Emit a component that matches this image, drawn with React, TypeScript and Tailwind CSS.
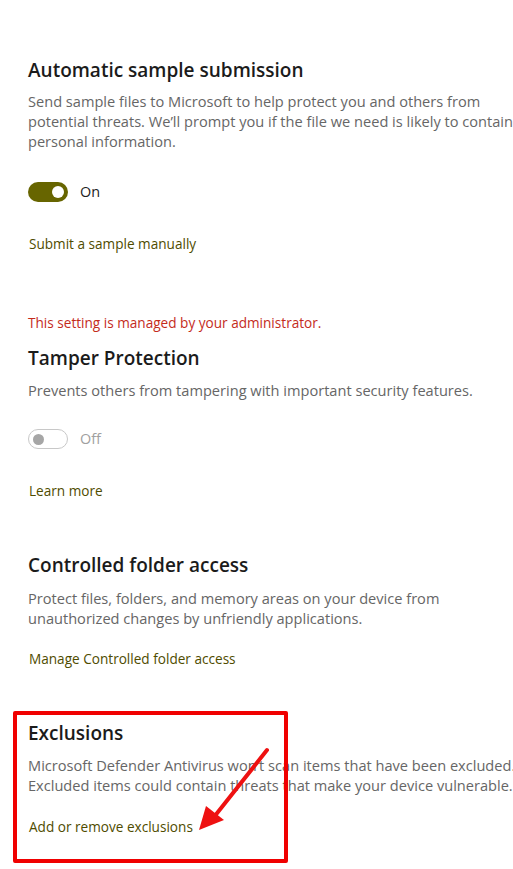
import React from "react";

const font = { fontFamily: '"Open Sans", "Noto Sans", sans-serif' };

function Heading({ children, className = "" }: { children: React.ReactNode; className?: string }) {
  return (
    <h2 className={`text-[19px] leading-[28px] font-semibold text-[#1b1b1b] whitespace-nowrap ${className}`}>
      {children}
    </h2>
  );
}

function Body({ lines, className = "" }: { lines: string[]; className?: string }) {
  return (
    <div className={`text-[14.6px] leading-[20px] text-[#666666] ${className}`}>
      {lines.map((l) => (
        <p key={l} className="whitespace-nowrap">{l}</p>
      ))}
    </div>
  );
}

function Link({ children, className = "" }: { children: React.ReactNode; className?: string }) {
  return (
    <a className={`block text-[13.6px] leading-[20px] text-[#4f4c00] whitespace-nowrap cursor-pointer ${className}`}>
      {children}
    </a>
  );
}

function Toggle({ on, className = "" }: { on: boolean; className?: string }) {
  return (
    <div className={`flex items-center gap-3 h-[20px] ${className}`}>
      {on ? (
        <div className="w-[40px] h-[20px] rounded-full bg-[#676500] flex items-center justify-end px-[4px]">
          <div className="w-[12px] h-[12px] rounded-full bg-white" />
        </div>
      ) : (
        <div className="w-[40px] h-[20px] rounded-full border border-[#c8c8c8] flex items-center px-[4px]">
          <div className="w-[11px] h-[11px] rounded-full bg-[#a6a6a6]" />
        </div>
      )}
      <span className={`text-[14.4px] ${on ? "text-[#222]" : "text-[#a0a0a0]"}`}>{on ? "On" : "Off"}</span>
    </div>
  );
}

export default function App() {
  return (
    <div className="relative w-[513px] h-[869px] overflow-hidden bg-white" style={font}>
      <div className="pl-[28px] pt-[56px]">
        <Heading>Automatic sample submission</Heading>
        <Body
          className="mt-[7px]"
          lines={[
            "Send sample files to Microsoft to help protect you and others from",
            "potential threats. We’ll prompt you if the file we need is likely to contain",
            "personal information.",
          ]}
        />
        <Toggle on className="mt-[31px]" />
        <Link className="mt-[32px] pl-[1px]">Submit a sample manually</Link>

        <p className="mt-[59px] text-[13.6px] leading-[20px] text-[#c42b1c] whitespace-nowrap">
          This setting is managed by your administrator.
        </p>
        <Heading className="mt-[11px]">Tamper Protection</Heading>
        <Body className="mt-[8px]" lines={["Prevents others from tampering with important security features."]} />
        <Toggle on={false} className="mt-[29px]" />
        <Link className="mt-[32px] pl-[1px]">Learn more</Link>

        <Heading className="mt-[50px]">Controlled folder access</Heading>
        <Body
          className="mt-[9px]"
          lines={[
            "Protect files, folders, and memory areas on your device from",
            "unauthorized changes by unfriendly applications.",
          ]}
        />
        <Link className="mt-[21px] pl-[1px]">Manage Controlled folder access</Link>

        <Heading className="mt-[50px]">Exclusions</Heading>
        <Body
          className="mt-[8px]"
          lines={[
            "Microsoft Defender Antivirus won’t scan items that have been excluded.",
            "Excluded items could contain threats that make your device vulnerable.",
          ]}
        />
        <Link className="mt-[22px] pl-[1px]">Add or remove exclusions</Link>
      </div>

      {/* annotation overlay */}
      <div className="absolute left-[13px] top-[711px] w-[275px] h-[152px] border-[4px] border-[#f00000] rounded-[2px]" />
      <svg className="absolute left-0 top-0" width="513" height="869" viewBox="0 0 513 869">
        <line x1="267" y1="750" x2="214" y2="817" stroke="#ee1111" strokeWidth="4" strokeLinecap="round" />
        <polygon points="199,830 206,806 224,820" fill="#ee1111" />
      </svg>
    </div>
  );
}
